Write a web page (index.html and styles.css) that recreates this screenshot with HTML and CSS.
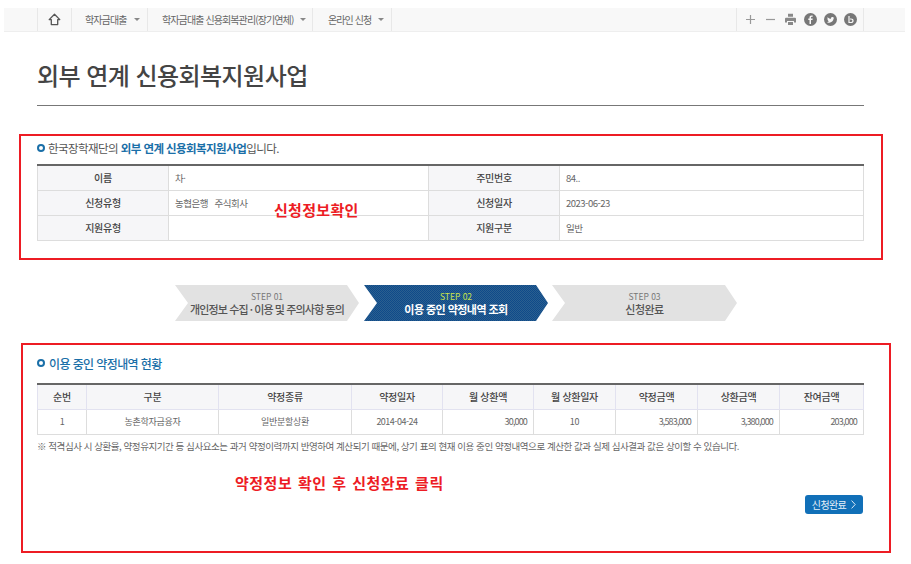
FILE: index.html
```html
<!DOCTYPE html>
<html lang="ko">
<head>
<meta charset="utf-8">
<title>외부 연계 신용회복지원사업</title>
<link rel="stylesheet" href="styles.css">
</head>
<body>
<nav class="topbar">
  <div class="nav-left">
    <a class="nav-home"><svg width="13" height="13" viewBox="0 0 13 13"><path d="M6.500 1.200 1.200 6.600h2.100v5h6.400v-5h2.100Z" fill="none" stroke="#555" stroke-width="1.300" stroke-linejoin="round"/></svg></a>
    <a class="nav-item nav-a">학자금대출<i class="caret"></i></a>
    <a class="nav-item nav-b">학자금대출 신용회복관리(장기연체)<i class="caret"></i></a>
    <a class="nav-item nav-c">온라인 신청<i class="caret"></i></a>
  </div>
  <div class="nav-tools">
    <svg width="13" height="13" viewBox="0 0 13 13"><path d="M6.500 2v9M2 6.500h9" stroke="#999" stroke-width="1.200"/></svg>
    <svg width="13" height="13" viewBox="0 0 13 13"><path d="M2 6.500h9" stroke="#999" stroke-width="1.200"/></svg>
    <svg width="13" height="13" viewBox="0 0 13 13"><path d="M4 .8h5v3H4zM2 4.800h9a1 1 0 0 1 1 1v3.700h-2V8H3v1.500H1V5.800a1 1 0 0 1 1-1zM4 9h5v3H4z" fill="#888"/></svg>
    <svg width="13" height="13" viewBox="0 0 13 13"><circle cx="6.500" cy="6.500" r="6.500" fill="#777"/><path d="M7 11V7h1.500l.2-1.500H7v-1c0-.5.2-.8.800-.8h.900V2.400H7.500C6.200 2.400 5.500 3.200 5.500 4.400v1.100H4.300V7h1.200v4Z" fill="#f8f8f8"/></svg>
    <svg width="13" height="13" viewBox="0 0 13 13"><circle cx="6.500" cy="6.500" r="6.500" fill="#777"/><path d="M3 9.200c2.800 1.300 6.300.2 6.600-3.600l.7-.8-.8.200.6-.8-.9.300c-.8-.8-2.400-.3-2.200 1.200C5.500 5.700 4.300 5 3.600 4.200c-.4.700-.2 1.500.4 2l-.6-.1c0 .7.400 1.200 1 1.400H3.800c.2.500.7.800 1.200.8-.6.500-1.300.7-2 .9Z" fill="#f8f8f8"/></svg>
    <svg width="13" height="13" viewBox="0 0 13 13"><circle cx="6.500" cy="6.500" r="6.500" fill="#777"/><path d="M5 3v6.500h1.800c1.500 0 2.200-.8 2.200-1.800S8.300 6 6.800 6H6" fill="none" stroke="#f8f8f8" stroke-width="1.200"/></svg>
  </div>
</nav>

<h1 class="page-title">외부 연계 신용회복지원사업</h1>

<section class="box box-info">
  <p class="lead"><i class="dot"></i>한국장학재단의 <b>외부 연계 신용회복지원사업</b>입니다.</p>
  <table class="grid info">
    <colgroup><col class="c-th"><col class="c-td"><col class="c-th"><col></colgroup>
    <tr><th>이름</th><td>차·</td><th>주민번호</th><td>84..</td></tr>
    <tr><th>신청유형</th><td>농협은행 &nbsp; 주식회사</td><th>신청일자</th><td>2023-06-23</td></tr>
    <tr><th>지원유형</th><td></td><th>지원구분</th><td>일반</td></tr>
  </table>
  <span class="note note-info">신청정보확인</span>
</section>

<ol class="steps">
  <li class="step s1"><small>STEP 01</small><strong>개인정보 수집 · 이용 및 주의사항 동의</strong></li>
  <li class="step s2"><small>STEP 02</small><strong>이용 중인 약정내역 조회</strong></li>
  <li class="step s3"><small>STEP 03</small><strong>신청완료</strong></li>
</ol>

<section class="box box-loan">
  <h2 class="sub"><i class="dot"></i>이용 중인 약정내역 현황</h2>
  <table class="grid loan">
    <colgroup><col class="l1"><col class="l2"><col class="l3"><col class="l4"><col class="l4"><col class="l5"><col class="l5"><col class="l5"><col></colgroup>
    <tr><th>순번</th><th>구분</th><th>약정종류</th><th>약정일자</th><th>월 상환액</th><th>월 상환일자</th><th>약정금액</th><th>상환금액</th><th>잔여금액</th></tr>
    <tr><td>1</td><td>농촌학자금융자</td><td>일반분할상환</td><td class="date">2014-04-24</td><td class="num">30,000</td><td>10</td><td class="num">3,583,000</td><td class="num">3,380,000</td><td class="num">203,000</td></tr>
  </table>
  <p class="remark">※ 적격심사 시 상환율, 약정유지기간 등 심사요소는 과거 약정이력까지 반영하여 계산되기 때문에, 상기 표의 현재 이용 중인 약정내역으로 계산한 값과 실제 심사결과 값은 상이할 수 있습니다.</p>
  <p class="note-loan">약정정보 확인 후 신청완료 클릭</p>
  <div class="actions"><a class="btn">신청완료<svg width="5" height="9" viewBox="0 0 5 9"><path d="M.6.6 4.200 4.500.6 8.400" fill="none" stroke="#dce9f5" stroke-width="1"/></svg></a></div>
</section>
</body>
</html>
```

FILE: styles.css
```css
* { box-sizing: border-box; }
html, body { margin: 0; padding: 0; }
body {
  width: 911px;
  height: 564px;
  overflow: hidden;
  background: #fff;
  font-family: "Noto Sans CJK KR", "Noto Sans", sans-serif;
  color: #555;
}
.topbar {
  margin: 8px 6px 0 4px;
  height: 24px;
  padding: 0 41px 0 33px;
  background: #f8f8f8;
  border-bottom: 1px solid #eee;
  display: flex;
  justify-content: space-between;
}
.nav-left { display: flex; border-left: 1px solid #e8e8e8; }
.nav-left a { display: flex; align-items: center; border-right: 1px solid #e8e8e8; font-size: 10px; letter-spacing: -0.9px; color: #666; white-space: nowrap; }
.nav-home { width: 34px; justify-content: center; }
.nav-a { width: 76px; padding-left: 13px; }
.nav-b { width: 165px; padding-left: 14px; }
.nav-c { width: 79px; padding-left: 15px; }
.caret { width: 0; height: 0; margin-left: 7px; border: 3px solid transparent; border-top: 3px solid #888; border-bottom: 0; }
.nav-tools { width: 128px; display: flex; align-items: center; gap: 7px; padding-left: 7px; border-left: 1px solid #e8e8e8; border-right: 1px solid #e8e8e8; }
.page-title {
  margin: 26px 47px 0 37px;
  height: 48px;
  border-bottom: 1px solid #777;
  font-size: 24px;
  line-height: 34px;
  font-weight: 500;
  color: #444;
  letter-spacing: -0.55px;
}
.box { position: relative; border: 2px solid #ed1c24; }
.box-info { margin: 28px 28px 0 19px; height: 126px; padding: 1px 19px 0 16px; }
.lead { margin: 0; height: 22px; display: flex; align-items: center; font-size: 11.500px; letter-spacing: -0.57px; color: #555; white-space: pre; }
.lead .dot { margin-right: 3px; }
.lead b { color: #1a6fa8; font-weight: 700; }
.dot { flex: none; width: 8px; height: 8px; margin-right: 4px; border: 2px solid #1a6fa8; border-radius: 50%; background: #fff; }
.grid { width: 827px; table-layout: fixed; border-collapse: collapse; border-top: 2px solid #666; }
.grid th, .grid td { padding: 0; font-size: 9px; letter-spacing: -0.3px; color: #666; border: 1px solid #ddd; overflow: hidden; white-space: nowrap; }
.grid tr:first-child th, .grid tr:first-child td { border-top: 0; }
.grid th { background: #f6f6f8; color: #444; font-weight: 500; font-size: 10px; }
.info { margin-top: 5px; }
.info tr { height: 25px; }
.info td { padding-left: 6px; font-size: 9.500px; letter-spacing: -0.5px; }
.c-th { width: 131px; }
.c-td { width: 260px; }
.note { position: absolute; color: #ed1c24; font-weight: 700; }
.note-info { left: 253px; top: 63px; font-size: 15px; letter-spacing: .3px; }
.steps { list-style: none; margin: 25px 0 0 175px; padding: 0; display: flex; gap: 5px; }
.step {
  width: 184px;
  height: 36px;
  display: flex;
  flex-direction: column;
  align-items: center;
  justify-content: center;
  background: #e2e2e2;
  clip-path: polygon(0 0, 172px 0, 184px 50%, 172px 100%, 0 100%, 13px 50%);
  color: #666;
}
.step small { font-size: 8.500px; line-height: 11px; color: #777; }
.step strong { font-size: 11px; line-height: 14px; font-weight: 500; letter-spacing: -0.55px; color: #555; white-space: nowrap; }
.s1 strong { letter-spacing: -0.8px; word-spacing: -0.3px; }
.s2 { background: repeating-conic-gradient(#0f4a8a 0 25%, #2a5f8f 0 50%) 0 0 / 2px 2px; }
.s2 small { color: #c9e34a; }
.s2 strong { color: #fff; font-weight: 700; }
.s3 { margin-left: -1px; width: 185px; clip-path: polygon(0 0, 173px 0, 185px 50%, 173px 100%, 0 100%, 13px 50%); }
.box-loan { margin: 22px 20px 0 21px; height: 210px; padding: 7px 0 0 14px; }
.sub { margin: 0; height: 22px; display: flex; align-items: center; font-size: 12px; font-weight: 500; letter-spacing: -0.6px; color: #1a6fa8; }
.loan { margin-top: 9px; }
.loan tr { height: 25px; }
.loan td { text-align: center; }
.loan th { text-align: center; border-color: #e2e2f0; }
.loan td.date { letter-spacing: -0.5px; }
.loan td.num { text-align: right; padding-right: 6px; letter-spacing: -0.85px; }
.l1 { width: 49px; }
.l2 { width: 132px; }
.l3 { width: 133px; }
.l4 { width: 91px; }
.l5 { width: 82px; }
.remark { margin: 4px 0 0; font-size: 9.500px; line-height: 14px; letter-spacing: -0.44px; color: #666; white-space: nowrap; }
.note-loan { margin: 20px 0 0 198px; font-size: 15px; line-height: 20px; font-weight: 700; color: #ed1c24; letter-spacing: .5px; word-spacing: 1px; }
.actions { margin: 2px 26px 0 0; display: flex; justify-content: flex-end; }
.btn { width: 58px; height: 19px; display: flex; align-items: center; justify-content: center; gap: 5px; background: #1170b8; border-radius: 3px; color: #e8f1f9; font-size: 10px; letter-spacing: -0.6px; }
```
